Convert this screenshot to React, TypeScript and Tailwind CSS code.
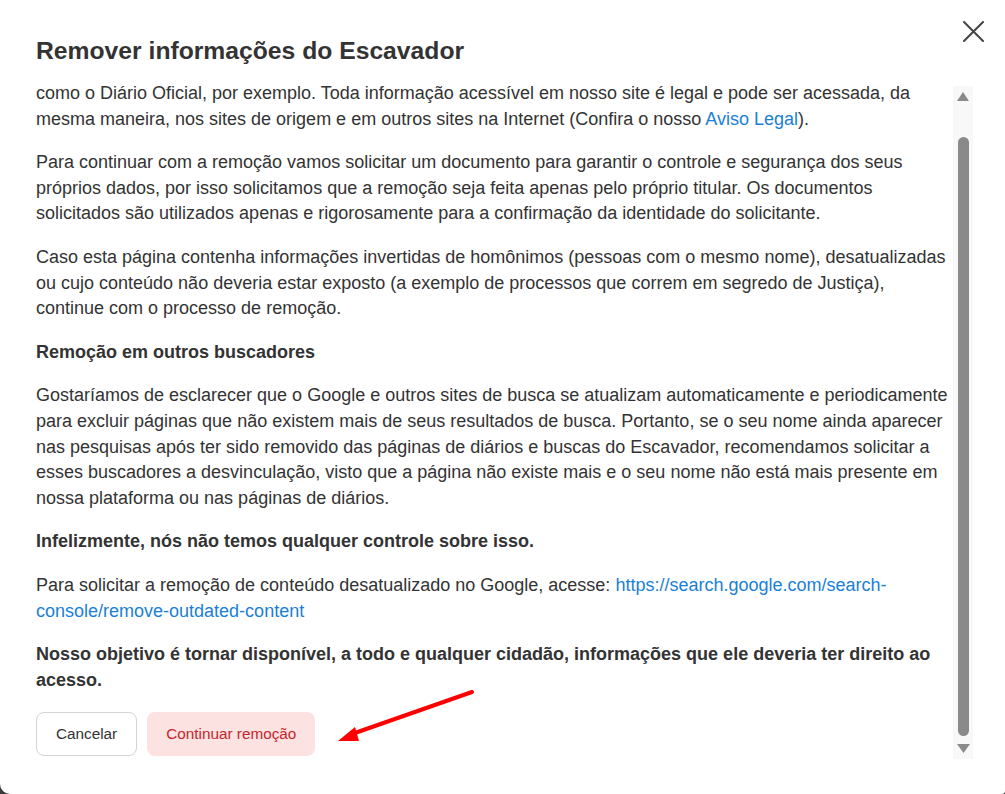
const font = { fontFamily: '"Liberation Sans", Arial, sans-serif' };

function Link({ children }: { children: React.ReactNode }) {
  return <a href="#" className="text-[#1a7fd8]">{children}</a>;
}

function FakeScrollbar() {
  return (
    <div className="w-[20px] h-[673px] mt-[5px] bg-[#f8f8f8] flex flex-col items-center shrink-0">
      <svg width="12" height="9" viewBox="0 0 12 9" className="mt-[6px]">
        <polygon points="6,0 12,9 0,9" fill="#8a8a8a" />
      </svg>
      <div className="w-[11px] flex-1 mt-[36px] mb-[8px] rounded-full bg-[#8a8a8a]" />
      <svg width="13" height="9" viewBox="0 0 13 9" className="mb-[6px]">
        <polygon points="0,0 13,0 6.5,9" fill="#8a8a8a" />
      </svg>
    </div>
  );
}

export default function App() {
  return (
    <div className="w-full h-[794px] bg-[#3a3a3a]" style={font}>
      <div className="relative w-full h-full bg-white rounded-bl-[10px] rounded-br-[3px] text-[#333333]">
        <button className="absolute left-[963px] top-[21px]">
          <svg width="21" height="21" viewBox="0 0 21 21">
            <path d="M1 1 L20 20 M20 1 L1 20" stroke="#444" strokeWidth="2" strokeLinecap="round" />
          </svg>
        </button>

        <h2 className="pl-9 pt-[35px] text-[24.7px] leading-[32px] font-bold text-[#333]">
          Remover informações do Escavador
        </h2>

        <div className="flex mt-[14px]">
          <div className="flex-1 pl-9 h-[680px] overflow-hidden text-[18px] leading-[25.6px] whitespace-nowrap">
            <p className="mb-[18px]">
              como o Diário Oficial, por exemplo. Toda informação acessível em nosso site é legal e pode ser acessada, da
              <br />
              mesma maneira, nos sites de origem e em outros sites na Internet (Confira o nosso <Link>Aviso Legal</Link>).
            </p>
            <p className="mb-[18px]">
              Para continuar com a remoção vamos solicitar um documento para garantir o controle e segurança dos seus
              <br />
              próprios dados, por isso solicitamos que a remoção seja feita apenas pelo próprio titular. Os documentos
              <br />
              solicitados são utilizados apenas e rigorosamente para a confirmação da identidade do solicitante.
            </p>
            <p className="mb-[18px]">
              Caso esta página contenha informações invertidas de homônimos (pessoas com o mesmo nome), desatualizadas
              <br />
              ou cujo conteúdo não deveria estar exposto (a exemplo de processos que correm em segredo de Justiça),
              <br />
              continue com o processo de remoção.
            </p>
            <p className="mb-[18px] font-bold">Remoção em outros buscadores</p>
            <p className="mb-[18px]">
              Gostaríamos de esclarecer que o Google e outros sites de busca se atualizam automaticamente e periodicamente
              <br />
              para excluir páginas que não existem mais de seus resultados de busca. Portanto, se o seu nome ainda aparecer
              <br />
              nas pesquisas após ter sido removido das páginas de diários e buscas do Escavador, recomendamos solicitar a
              <br />
              esses buscadores a desvinculação, visto que a página não existe mais e o seu nome não está mais presente em
              <br />
              nossa plataforma ou nas páginas de diários.
            </p>
            <p className="mb-[18px] font-bold">Infelizmente, nós não temos qualquer controle sobre isso.</p>
            <p className="mb-[18px]">
              Para solicitar a remoção de conteúdo desatualizado no Google, acesse:{' '}
              <Link>
                https://search.google.com/search-
                <br />
                console/remove-outdated-content
              </Link>
            </p>
            <p className="font-bold">
              Nosso objetivo é tornar disponível, a todo e qualquer cidadão, informações que ele deveria ter direito ao
              <br />
              acesso.
            </p>

            <div className="flex gap-[10px] mt-[19px]">
              <button className="h-[44px] px-[19px] rounded-[8px] border border-[#d4d4d4] bg-white text-[15.3px] text-[#333]">
                Cancelar
              </button>
              <button className="h-[44px] px-[19px] rounded-[8px] bg-[#fde2e2] text-[15.3px] text-[#c4262c]">
                Continuar remoção
              </button>
            </div>
          </div>
          <div className="pr-[32px]">
            <FakeScrollbar />
          </div>
        </div>

        <svg className="absolute left-0 top-0 pointer-events-none" width="1005" height="794">
          <line x1="472" y1="692" x2="352" y2="734" stroke="#ff0000" strokeWidth="4" strokeLinecap="round" />
          <polygon points="338,741 355,727 359,741" fill="#ff0000" />
        </svg>
      </div>
    </div>
  );
}
